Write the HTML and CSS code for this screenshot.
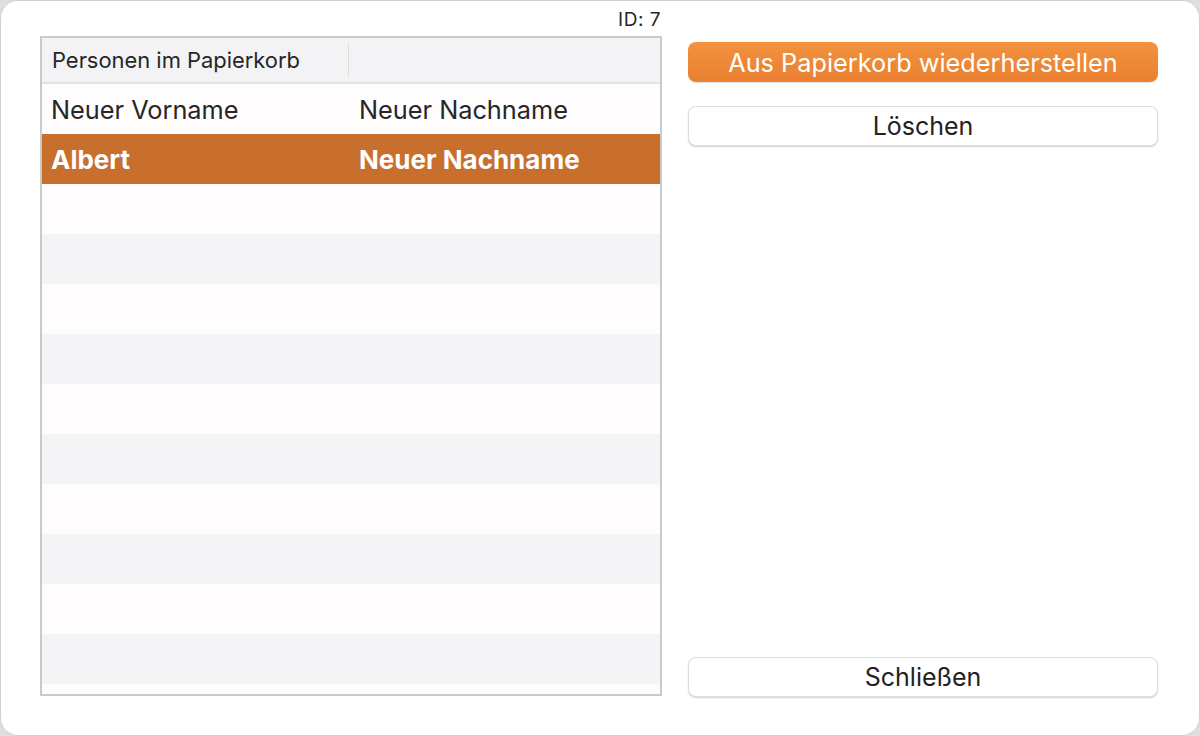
FILE: index.html
```html
<!DOCTYPE html>
<html lang="de">
<head>
  <meta charset="UTF-8">
  <meta name="viewport" content="width=device-width, initial-scale=1.0">
  <title>Papierkorb</title>
  <link rel="stylesheet" href="styles.css">
</head>
<body>
  <div class="window">
    <div class="list-column">
      <div class="id-line">ID: 7</div>
      <div class="table">
        <div class="table-head">
          <div class="head-cell">Personen im Papierkorb</div>
          <div class="head-cell"></div>
        </div>
        <div class="table-body">
          <div class="row"><span class="cell">Neuer Vorname</span><span class="cell">Neuer Nachname</span></div>
          <div class="row selected"><span class="cell">Albert</span><span class="cell">Neuer Nachname</span></div>
          <div class="row"></div>
          <div class="row"></div>
          <div class="row"></div>
          <div class="row"></div>
          <div class="row"></div>
          <div class="row"></div>
          <div class="row"></div>
          <div class="row"></div>
          <div class="row"></div>
          <div class="row"></div>
          <div class="row"></div>
        </div>
      </div>
    </div>
    <div class="button-column">
      <button class="btn btn-primary">Aus Papierkorb wiederherstellen</button>
      <button class="btn">Löschen</button>
      <div class="spacer"></div>
      <button class="btn">Schließen</button>
    </div>
  </div>
</body>
</html>
```

FILE: styles.css
```css
body { margin: 0; padding: 0; background-color: #dedede; font-family: Inter, "Noto Sans", sans-serif; color: #262626; }
.window {
  box-sizing: border-box; width: 1200px; height: 736px; display: flex; gap: 26px;
  padding: 0 41px 0 39px; background-color: #fff; border: 1px solid #d2d2d2; border-radius: 18px;
}
.list-column { width: 622px; display: flex; flex-direction: column; }
.id-line { height: 35px; text-align: right; font-size: 19px; line-height: 37px; padding-right: 1px; letter-spacing: 0.5px; }
.table {
  box-sizing: border-box; height: 660px; border: 2px solid #cacaca; overflow: hidden;
  display: flex; flex-direction: column;
}
.table-head {
  display: flex; height: 44px; flex-shrink: 0; background-color: #f3f3f5;
  border-bottom: 2px solid #e3e3e5; align-items: center;
}
.head-cell { box-sizing: border-box; padding-left: 10px; font-size: 21.9px; line-height: 33px; }
.head-cell:first-child { width: 307px; border-right: 1px solid #dcdcdc; height: 33px; }
.table-body { flex: 1; overflow: hidden; }
.row { display: flex; height: 50px; align-items: center; background-color: #fefcfd; font-size: 25.3px; }
.row:nth-child(even) { background-color: #f4f4f6; }
.row.selected { background-color: #c96f2e; color: #fff; font-weight: 700; font-size: 26px; }
.cell { box-sizing: border-box; padding-left: 9px; }
.cell:first-child { width: 307px; }
.cell:last-child { padding-left: 10px; }
.button-column { width: 470px; display: flex; flex-direction: column; padding: 41px 0 38px; box-sizing: border-box; }
.btn {
  height: 40px; margin-bottom: 24px; border: 1px solid #dedede; border-radius: 8px; background-color: #fff;
  box-shadow: 0 1px 1.5px rgba(0,0,0,0.18); font-family: inherit; font-size: 25px; color: #222;
  padding: 0; cursor: pointer;
}
.btn:last-child { margin-bottom: 0; }
.btn-primary {
  border: none; color: #fff; background: linear-gradient(#f2923f, #e97f30);
  box-shadow: 0 1px 1px rgba(0,0,0,0.12); font-size: 25.3px;
}
.spacer { flex: 1; }
```
